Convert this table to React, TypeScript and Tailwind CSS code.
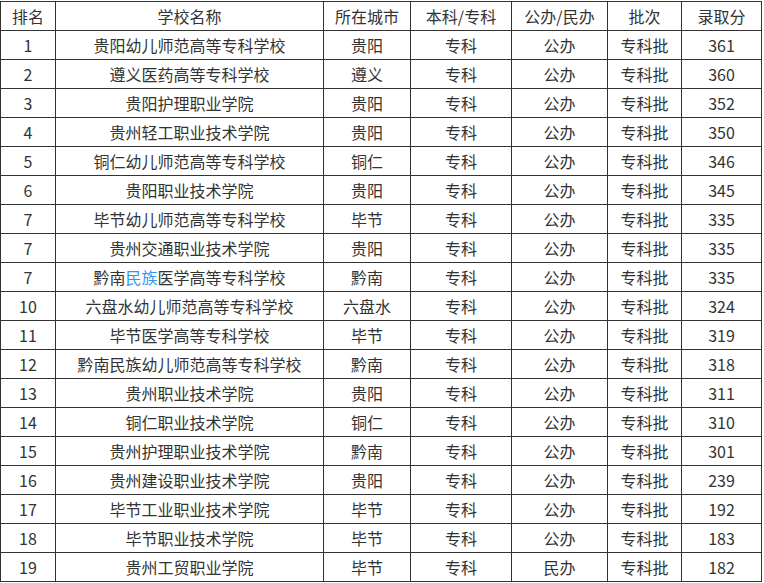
const rows: [string, string, string, string, string, string, string][] = [
  ['1', '贵阳幼儿师范高等专科学校', '贵阳', '专科', '公办', '专科批', '361'],
  ['2', '遵义医药高等专科学校', '遵义', '专科', '公办', '专科批', '360'],
  ['3', '贵阳护理职业学院', '贵阳', '专科', '公办', '专科批', '352'],
  ['4', '贵州轻工职业技术学院', '贵阳', '专科', '公办', '专科批', '350'],
  ['5', '铜仁幼儿师范高等专科学校', '铜仁', '专科', '公办', '专科批', '346'],
  ['6', '贵阳职业技术学院', '贵阳', '专科', '公办', '专科批', '345'],
  ['7', '毕节幼儿师范高等专科学校', '毕节', '专科', '公办', '专科批', '335'],
  ['7', '贵州交通职业技术学院', '贵阳', '专科', '公办', '专科批', '335'],
  ['7', '黔南民族医学高等专科学校', '黔南', '专科', '公办', '专科批', '335'],
  ['10', '六盘水幼儿师范高等专科学校', '六盘水', '专科', '公办', '专科批', '324'],
  ['11', '毕节医学高等专科学校', '毕节', '专科', '公办', '专科批', '319'],
  ['12', '黔南民族幼儿师范高等专科学校', '黔南', '专科', '公办', '专科批', '318'],
  ['13', '贵州职业技术学院', '贵阳', '专科', '公办', '专科批', '311'],
  ['14', '铜仁职业技术学院', '铜仁', '专科', '公办', '专科批', '310'],
  ['15', '贵州护理职业技术学院', '黔南', '专科', '公办', '专科批', '301'],
  ['16', '贵州建设职业技术学院', '贵阳', '专科', '公办', '专科批', '239'],
  ['17', '毕节工业职业技术学院', '毕节', '专科', '公办', '专科批', '192'],
  ['18', '毕节职业技术学院', '毕节', '专科', '公办', '专科批', '183'],
  ['19', '贵州工贸职业学院', '毕节', '专科', '民办', '专科批', '182'],
];

const headers = ['排名', '学校名称', '所在城市', '本科/专科', '公办/民办', '批次', '录取分'];
const widths = ['w-[55px]', 'w-[268px]', 'w-[87px]', 'w-[101px]', 'w-[96px]', 'w-[74px]', 'w-[80px]'];

function SchoolName({ name }: { name: string }) {
  if (name === '黔南民族医学高等专科学校') {
    return (
      <>
        黔南<span className="text-[#2f97f3]">民族</span>医学高等专科学校
      </>
    );
  }
  return <>{name}</>;
}

export default function App() {
  return (
    <div className="w-[764px] h-[583px] bg-white overflow-hidden pt-[1px] font-['Noto_Sans_CJK_SC','Noto_Sans',sans-serif] text-[#333] text-[16px]">
      <table className="border-collapse table-fixed w-[761px]">
        <colgroup>
          {widths.map((w, i) => (
            <col key={i} className={w} />
          ))}
        </colgroup>
        <thead>
          <tr className="h-[29px]">
            {headers.map((h) => (
              <th key={h} className="border border-[#333] font-normal text-center leading-none p-0">
                {h}
              </th>
            ))}
          </tr>
        </thead>
        <tbody>
          {rows.map((r, i) => (
            <tr key={i} className="h-[29px]">
              {r.map((c, j) => (
                <td key={j} className="border border-[#333] text-center leading-none p-0 whitespace-nowrap">
                  {j === 1 ? <SchoolName name={c} /> : c}
                </td>
              ))}
            </tr>
          ))}
        </tbody>
      </table>
    </div>
  );
}
